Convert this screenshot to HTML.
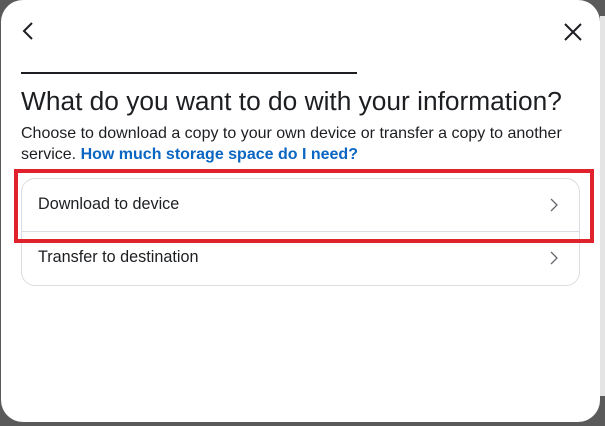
<!DOCTYPE html>
<html><head><style>
body{margin:0;width:605px;height:426px;overflow:hidden;background:#5a5a5a;font-family:"Liberation Sans",sans-serif;position:relative}
.rbg{position:absolute;left:600px;top:16px;width:5px;height:380px;background:#e4e4e4}
.modal{position:absolute;left:1px;top:0;width:599px;height:422px;background:#fff;border-radius:22px}
.line{position:absolute;left:21px;top:72px;width:336px;height:2px;background:#1c1e21}
h1{position:absolute;left:21px;top:86px;margin:0;font-size:26.3px;font-weight:normal;color:#1c1e21;white-space:nowrap}
p{position:absolute;left:21px;top:123px;margin:0;font-size:16px;line-height:21px;color:#1c1e21;width:565px}
p b{color:#0a66c2}
.card{position:absolute;left:21px;top:178px;width:557px;height:106px;border:1px solid #dadde1;border-radius:14px}
.div{position:absolute;left:21px;top:231px;width:559px;height:1px;background:#dadde1}
.it{position:absolute;left:38px;font-size:16.2px;color:#1c1e21}
.red{position:absolute;left:14px;top:169px;width:572px;height:66px;border:4px solid #e0222d}
svg{position:absolute}
</style></head><body>
<div class="rbg"></div>
<div class="modal"></div>
<svg style="left:19px;top:20px" width="20" height="22"><path d="M13 3 L5 11 L13 19" stroke="#1c1e21" stroke-width="2" fill="none"/></svg>
<svg style="left:562px;top:21px" width="22" height="22"><path d="M3 3 L19 19 M19 3 L3 19" stroke="#1c1e21" stroke-width="2" fill="none"/></svg>
<div class="line"></div>
<h1>What do you want to do with your information?</h1>
<p>Choose to download a copy to your own device or transfer a copy to another service. <b>How much storage space do I need?</b></p>
<div class="card"></div>
<div class="div"></div>
<div class="it" style="top:195px">Download to device</div>
<div class="it" style="top:248px">Transfer to destination</div>
<svg style="left:548px;top:197px" width="12" height="16"><path d="M3 2 L9 8 L3 14" stroke="#65676b" stroke-width="1.3" fill="none"/></svg>
<svg style="left:548px;top:250px" width="12" height="16"><path d="M3 2 L9 8 L3 14" stroke="#65676b" stroke-width="1.3" fill="none"/></svg>
<div class="red"></div>
</body></html>
